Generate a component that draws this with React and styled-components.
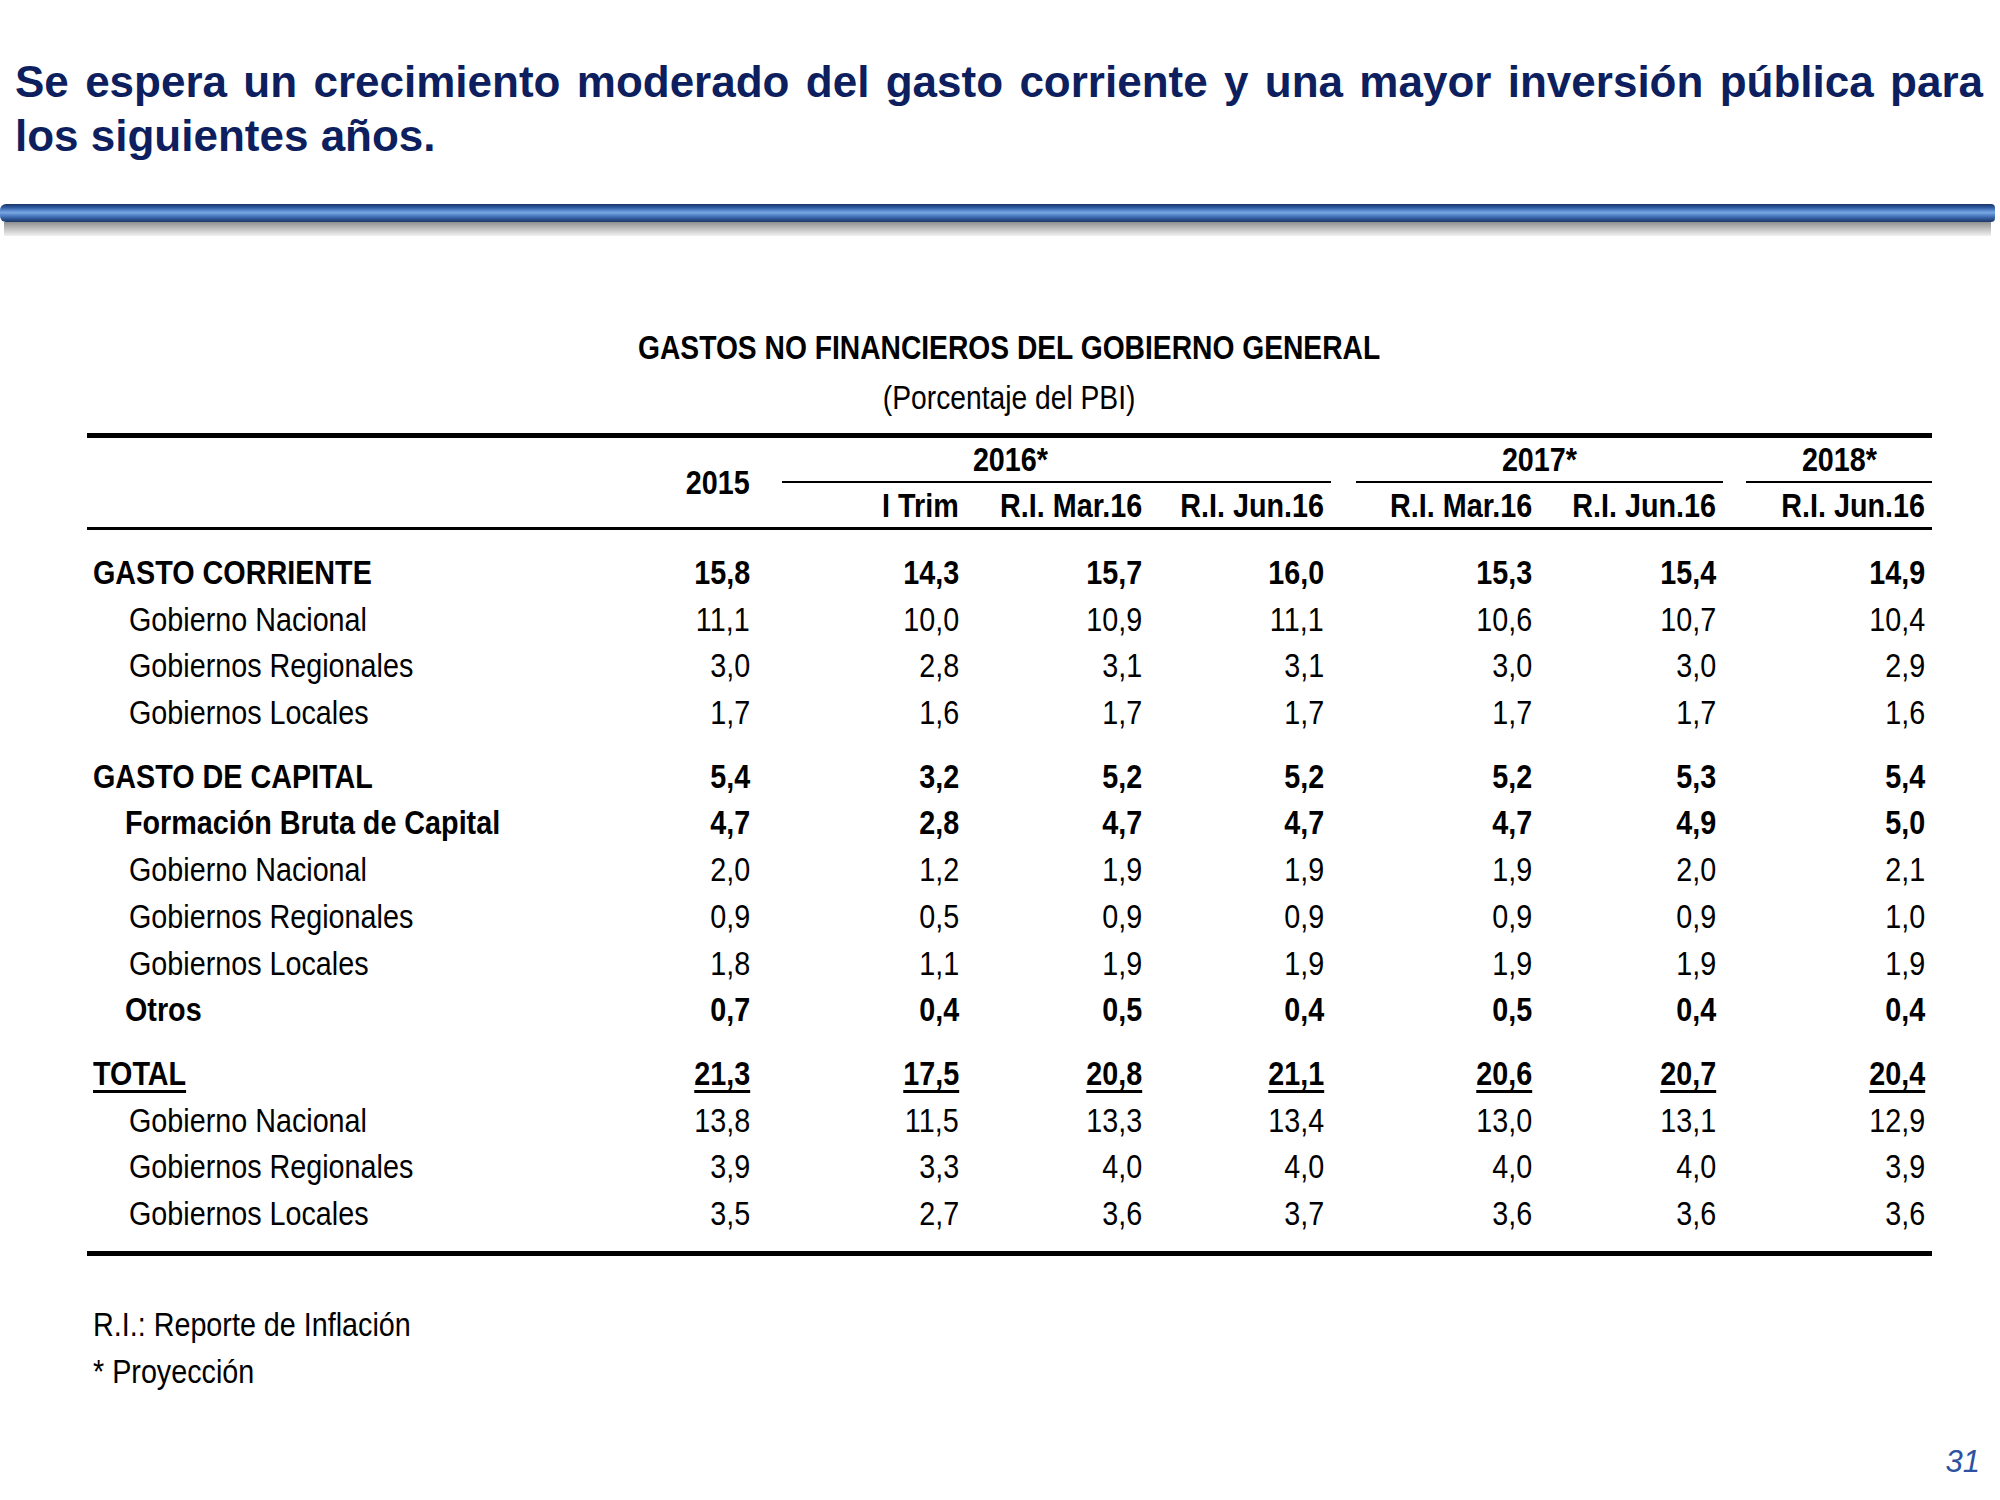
import styled, { createGlobalStyle } from "styled-components";

const GlobalStyle = createGlobalStyle`
  html, body {
    margin: 0;
    padding: 0;
    background: #ffffff;
  }
  body {
    font-family: "Liberation Sans", Arial, sans-serif;
    color: #000;
  }
`;

const COLUMNS =
  "513px 157px 25px 184px 183px 182px 25px 183px 184px 23px 186px";
const VALUE_COLS = [2, 4, 5, 6, 8, 9, 11];

const groups = [
  [
    { label: "GASTO CORRIENTE", level: 0, bold: true, values: ["15,8", "14,3", "15,7", "16,0", "15,3", "15,4", "14,9"] },
    { label: "Gobierno Nacional", level: 2, values: ["11,1", "10,0", "10,9", "11,1", "10,6", "10,7", "10,4"] },
    { label: "Gobiernos Regionales", level: 2, values: ["3,0", "2,8", "3,1", "3,1", "3,0", "3,0", "2,9"] },
    { label: "Gobiernos Locales", level: 2, values: ["1,7", "1,6", "1,7", "1,7", "1,7", "1,7", "1,6"] },
  ],
  [
    { label: "GASTO DE CAPITAL", level: 0, bold: true, values: ["5,4", "3,2", "5,2", "5,2", "5,2", "5,3", "5,4"] },
    { label: "Formación Bruta de Capital", level: 1, bold: true, values: ["4,7", "2,8", "4,7", "4,7", "4,7", "4,9", "5,0"] },
    { label: "Gobierno Nacional", level: 2, values: ["2,0", "1,2", "1,9", "1,9", "1,9", "2,0", "2,1"] },
    { label: "Gobiernos Regionales", level: 2, values: ["0,9", "0,5", "0,9", "0,9", "0,9", "0,9", "1,0"] },
    { label: "Gobiernos Locales", level: 2, values: ["1,8", "1,1", "1,9", "1,9", "1,9", "1,9", "1,9"] },
    { label: "Otros", level: 1, bold: true, values: ["0,7", "0,4", "0,5", "0,4", "0,5", "0,4", "0,4"] },
  ],
  [
    { label: "TOTAL", level: 0, bold: true, underline: true, values: ["21,3", "17,5", "20,8", "21,1", "20,6", "20,7", "20,4"] },
    { label: "Gobierno Nacional", level: 2, values: ["13,8", "11,5", "13,3", "13,4", "13,0", "13,1", "12,9"] },
    { label: "Gobiernos Regionales", level: 2, values: ["3,9", "3,3", "4,0", "4,0", "4,0", "4,0", "3,9"] },
    { label: "Gobiernos Locales", level: 2, values: ["3,5", "2,7", "3,6", "3,7", "3,6", "3,6", "3,6"] },
  ],
];

const subHeads = [
  { text: "I Trim", col: 4 },
  { text: "R.I. Mar.16", col: 5 },
  { text: "R.I. Jun.16", col: 6 },
  { text: "R.I. Mar.16", col: 8 },
  { text: "R.I. Jun.16", col: 9 },
  { text: "R.I. Jun.16", col: 11 },
];

const Page = styled.div`
  width: 2000px;
  min-height: 1500px;
  display: flex;
  flex-direction: column;
  padding-top: 55px;
  box-sizing: border-box;
`;

const Heading = styled.h1`
  margin: 0 0 0 15px;
  width: 1968px;
  font-family: "Liberation Sans", Arial, sans-serif;
  font-weight: 700;
  font-size: 44px;
  line-height: 54px;
  color: #0d1f5e;
`;

const HeadLine = styled.span`
  display: block;
  text-align: left;
  text-align-last: ${(p) => (p.$justify ? "justify" : "left")};
`;

const Rule = styled.div`
  margin-top: 41px;
  width: 1995px;
`;

const Bar = styled.div`
  height: 18px;
  border-radius: 6px 4px 4px 6px;
  background: linear-gradient(
    to bottom,
    #1a3468 0%,
    #2b569c 18%,
    #5d8fd2 38%,
    #7aa6e0 48%,
    #4a7cc2 66%,
    #2c5291 84%,
    #1d3766 100%
  );
`;

const BarShadow = styled.div`
  height: 14px;
  margin: 0 4px;
  background: linear-gradient(to bottom, #8f8f8f, #bdbdbd 45%, #f1f1f1 100%);
`;

/* Arial Narrow look: Liberation Sans squeezed horizontally */
const Narrow = styled.span`
  display: inline-block;
  white-space: nowrap;
  transform: scaleX(${(p) => p.$scale || 0.845});
  transform-origin: ${(p) => p.$origin || "left"} center;
`;

const Section = styled.section`
  margin: 91px 0 0 87px;
  width: 1845px;
`;

const Caption = styled.div`
  text-align: center;
  font-size: 34px;
  line-height: 40px;
  font-weight: ${(p) => (p.$bold ? 700 : 400)};
  margin-top: ${(p) => (p.$gap ? "10px" : "0")};
`;

const Table = styled.div`
  margin-top: 16px;
  border-top: 5px solid #000;
  border-bottom: 5px solid #000;
`;

const Header = styled.div`
  display: grid;
  grid-template-columns: ${COLUMNS};
  grid-template-rows: 45px 44px;
  border-bottom: 3px solid #000;
  font-weight: 700;
  font-size: 34px;
`;

const HeadCell = styled.div`
  grid-column: ${(p) => p.$col};
  grid-row: ${(p) => p.$row};
  display: flex;
  align-items: center;
  justify-content: ${(p) => (p.$center ? "center" : "flex-end")};
  padding-right: ${(p) => p.$pr ?? 7}px;
  border-bottom: ${(p) => (p.$line ? "2px solid #000" : "none")};
`;

const Body = styled.div`
  padding: 19px 0 14px;
  display: flex;
  flex-direction: column;
  gap: 17px;
`;

const Group = styled.div`
  display: flex;
  flex-direction: column;
`;

const Row = styled.div`
  display: grid;
  grid-template-columns: ${COLUMNS};
  height: 46.7px;
  line-height: 46.7px;
  font-size: 34px;
  font-weight: ${(p) => (p.$bold ? 700 : 400)};
`;

const Label = styled.div`
  grid-column: 1;
  padding-left: ${(p) => [6, 38, 42][p.$level]}px;
`;

const Value = styled.div`
  grid-column: ${(p) => p.$col};
  text-align: right;
  padding-right: 7px;
`;

const Mark = styled.span`
  text-decoration: ${(p) => (p.$on ? "underline" : "none")};
  text-decoration-thickness: 3px;
  text-underline-offset: 5px;
`;

const Notes = styled.div`
  margin: 45px 0 0 93px;
  font-size: 34px;
  line-height: 47px;
`;

const Footer = styled.div`
  margin-top: 47px;
  padding-right: 20px;
  display: flex;
  justify-content: flex-end;
`;

const PageNum = styled.span`
  font-style: italic;
  font-size: 31px;
  line-height: 40px;
  color: #2d52a0;
`;

export default function App() {
  return (
    <>
      <GlobalStyle />
      <Page>
        <Heading>
          <HeadLine $justify>
            Se espera un crecimiento moderado del gasto corriente y una mayor
            inversión pública para
          </HeadLine>
          <HeadLine>los siguientes años.</HeadLine>
        </Heading>

        <Rule>
          <Bar />
          <BarShadow />
        </Rule>

        <Section>
          <Caption $bold>
            <Narrow $origin="center" $scale={0.83}>
              GASTOS NO FINANCIEROS DEL GOBIERNO GENERAL
            </Narrow>
          </Caption>
          <Caption $gap>
            <Narrow $origin="center" $scale={0.83}>
              (Porcentaje del PBI)
            </Narrow>
          </Caption>

          <Table>
            <Header>
              <HeadCell $col={2} $row="1 / span 2">
                <Narrow $origin="right">2015</Narrow>
              </HeadCell>
              <HeadCell $col="4 / span 3" $row={1} $center $line $pr={93}>
                <Narrow $origin="center">2016*</Narrow>
              </HeadCell>
              <HeadCell $col="8 / span 2" $row={1} $center $line $pr={0}>
                <Narrow $origin="center">2017*</Narrow>
              </HeadCell>
              <HeadCell $col={11} $row={1} $center $line $pr={0}>
                <Narrow $origin="center">2018*</Narrow>
              </HeadCell>
              {subHeads.map((h) => (
                <HeadCell key={h.col} $col={h.col} $row={2}>
                  <Narrow $origin="right">{h.text}</Narrow>
                </HeadCell>
              ))}
            </Header>

            <Body>
              {groups.map((group, gi) => (
                <Group key={gi}>
                  {group.map((row, ri) => (
                    <Row key={ri} $bold={row.bold}>
                      <Label $level={row.level}>
                        <Narrow>
                          <Mark $on={row.underline}>{row.label}</Mark>
                        </Narrow>
                      </Label>
                      {row.values.map((v, vi) => (
                        <Value key={vi} $col={VALUE_COLS[vi]}>
                          <Narrow $origin="right">
                            <Mark $on={row.underline}>{v}</Mark>
                          </Narrow>
                        </Value>
                      ))}
                    </Row>
                  ))}
                </Group>
              ))}
            </Body>
          </Table>
        </Section>

        <Notes>
          <div>
            <Narrow>R.I.: Reporte de Inflación</Narrow>
          </div>
          <div>
            <Narrow>* Proyección</Narrow>
          </div>
        </Notes>

        <Footer>
          <PageNum>31</PageNum>
        </Footer>
      </Page>
    </>
  );
}
